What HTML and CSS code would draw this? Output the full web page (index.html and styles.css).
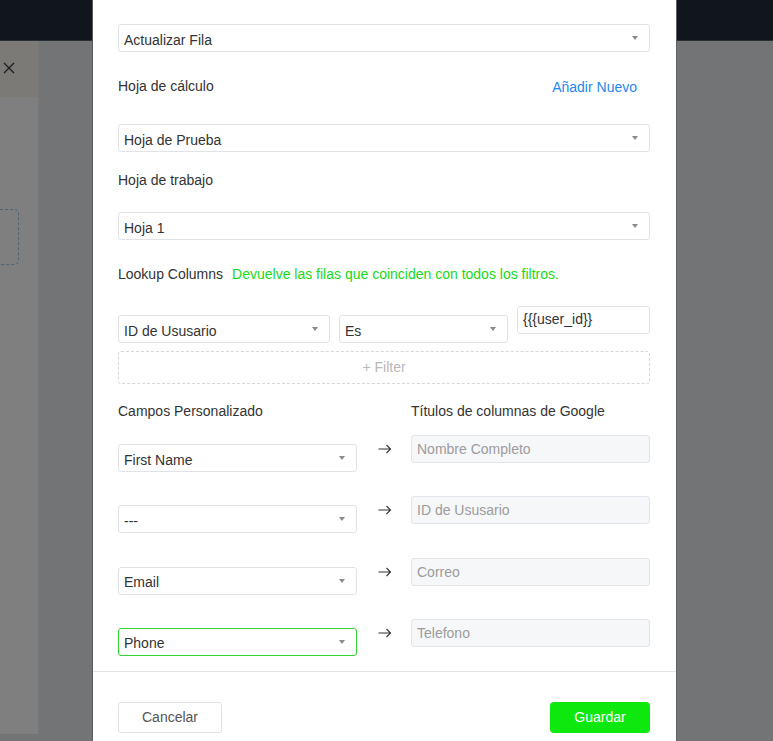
FILE: index.html
```html
<!DOCTYPE html>
<html lang="es">
<head>
<meta charset="utf-8">
<title>Actualizar Fila</title>
<link rel="stylesheet" href="styles.css">
</head>
<body>
<div class="page">
  <div class="topbar"></div>
  <div class="main">
    <div class="sidepanel">
      <div class="side-head">
        <svg class="close" width="12" height="12" viewBox="0 0 12 12"><path d="M1 1 L11 11 M11 1 L1 11" stroke="#1b1d22" stroke-width="1.3" fill="none"/></svg>
      </div>
      <div class="side-body">
        <div class="dropzone"></div>
      </div>
    </div>
    <div class="gutter"></div>
  </div>
</div>

<div class="modal">
  <div class="modal-body">
    <div class="select"><span>Actualizar Fila</span><i class="caret"></i></div>

    <div class="label-row gap-a">
      <span class="label">Hoja de cálculo</span>
      <a class="link">Añadir Nuevo</a>
    </div>
    <div class="select gap-b"><span>Hoja de Prueba</span><i class="caret"></i></div>

    <div class="label-row gap-c"><span class="label">Hoja de trabajo</span></div>
    <div class="select gap-d"><span>Hoja 1</span><i class="caret"></i></div>

    <div class="label-row gap-a">
      <span class="label">Lookup Columns</span>
      <span class="hint">Devuelve las filas que coinciden con todos los filtros.</span>
    </div>

    <div class="filter-row">
      <div class="select sel-a"><span>ID de Ususario</span><i class="caret"></i></div>
      <div class="select sel-b"><span>Es</span><i class="caret"></i></div>
      <div class="input val">{{{user_id}}</div>
    </div>
    <div class="add-filter">+ Filter</div>

    <div class="map-grid">
      <div class="label map-head">Campos Personalizado</div>
      <div></div>
      <div class="label map-head">Títulos de columnas de Google</div>

      <div class="map-row">
        <div class="select low"><span>First Name</span><i class="caret"></i></div>
        <div class="arrow"><svg width="14" height="10" viewBox="0 0 14 10"><path d="M0.5 5 H12.5 M8.5 1 L12.5 5 L8.5 9" stroke="#333" stroke-width="1.1" fill="none"/></svg></div>
        <div class="input ro">Nombre Completo</div>
      </div>
      <div class="map-row">
        <div class="select low"><span>---</span><i class="caret"></i></div>
        <div class="arrow"><svg width="14" height="10" viewBox="0 0 14 10"><path d="M0.5 5 H12.5 M8.5 1 L12.5 5 L8.5 9" stroke="#333" stroke-width="1.1" fill="none"/></svg></div>
        <div class="input ro">ID de Ususario</div>
      </div>
      <div class="map-row">
        <div class="select low"><span>Email</span><i class="caret"></i></div>
        <div class="arrow"><svg width="14" height="10" viewBox="0 0 14 10"><path d="M0.5 5 H12.5 M8.5 1 L12.5 5 L8.5 9" stroke="#333" stroke-width="1.1" fill="none"/></svg></div>
        <div class="input ro">Correo</div>
      </div>
      <div class="map-row">
        <div class="select low focus"><span>Phone</span><i class="caret"></i></div>
        <div class="arrow"><svg width="14" height="10" viewBox="0 0 14 10"><path d="M0.5 5 H12.5 M8.5 1 L12.5 5 L8.5 9" stroke="#333" stroke-width="1.1" fill="none"/></svg></div>
        <div class="input ro">Telefono</div>
      </div>
    </div>
  </div>
  <div class="modal-footer">
    <button class="btn btn-default">Cancelar</button>
    <button class="btn btn-primary">Guardar</button>
  </div>
</div>
</body>
</html>
```

FILE: styles.css
```css
html, body {
  margin: 0;
  padding: 0;
}
body {
  width: 773px;
  height: 741px;
  overflow: hidden;
  position: relative;
  font-family: "Liberation Sans", Arial, sans-serif;
  font-size: 14px;
  color: #333;
  background: #737475;
}
.page {
  display: flex;
  flex-direction: column;
  height: 741px;
}
.topbar {
  height: 40px;
  background: #11151c;
  border-bottom: 1px solid #2a2e35;
}
.main {
  flex: 1;
  display: flex;
}
.sidepanel {
  width: 38px;
  display: flex;
  flex-direction: column;
  margin-bottom: 7px;
  border-right: 1px solid #787878;
}
.side-head {
  height: 56px;
  background: #7b7a77;
  display: flex;
  align-items: center;
  padding-left: 3px;
}
.close { margin-top: -2px; }
.side-body {
  flex: 1;
  background: #7f7f7f;
  padding-top: 112px;
}
.dropzone {
  width: 18px;
  height: 54px;
  border: 1px dashed #4d6273;
  border-left: none;
  border-radius: 0 5px 5px 0;
}
.gutter {
  flex: 1;
  background: #737475;
}

.modal {
  position: absolute;
  left: 93px;
  top: 0;
  width: 583px;
  height: 741px;
  background: #fff;
  box-shadow: -1px 0 0 #5a5a5a, 1px 0 0 #626262;
}
.modal-body {
  padding: 24px 26px 15px 25px;
  border-bottom: 1px solid #e3e5e8;
}
.select {
  height: 28px;
  box-sizing: border-box;
  border: 1px solid #dfe2e7;
  border-radius: 3px;
  display: flex;
  align-items: center;
  justify-content: space-between;
  padding: 0 11px 0 5px;
  color: #333;
  background: #fff;
}
.select span { padding-top: 3px; }
.select.focus { border-color: #31d431; }
.caret {
  width: 0;
  height: 0;
  border-left: 3.5px solid transparent;
  border-right: 3.5px solid transparent;
  border-top: 4px solid #8a8a8a;
}
.label-row {
  height: 28px;
  display: flex;
  align-items: center;
  justify-content: space-between;
}
.label { color: #333; }
.link {
  color: #1e87f0;
  font-size: 14px;
  margin-right: 13px;
  padding-top: 2px;
}
.hint {
  color: #17d917;
  margin-left: 9px;
  margin-right: auto;
}
.gap-a { margin-top: 20px; }
.gap-b { margin-top: 24px; }
.gap-c { margin-top: 14px; }
.gap-d { margin-top: 18px; }

.filter-row {
  margin-top: 18px;
  display: flex;
  align-items: flex-start;
  gap: 9px;
}
.sel-a { width: 212px; margin-top: 9px; }
.sel-b { width: 169px; margin-top: 9px; }
.input {
  height: 28px;
  box-sizing: border-box;
  border: 1px solid #dfe2e7;
  border-radius: 3px;
  display: flex;
  align-items: center;
  padding: 0 5px;
}
.val { flex: 1; color: #333; padding-bottom: 2px; }
.add-filter {
  margin-top: 8px;
  height: 33px;
  box-sizing: border-box;
  border: 1px dashed #d6d8db;
  border-radius: 3px;
  display: flex;
  align-items: center;
  justify-content: center;
  color: #b8b8b8;
  padding-bottom: 1px;
}
.map-grid {
  margin-top: 13px;
  display: grid;
  grid-template-columns: 239px 54px 1fr;
}
.map-head {
  height: 28px;
  display: flex;
  align-items: center;
  margin-bottom: 10px;
}
.map-row {
  grid-column: 1 / 4;
  display: grid;
  grid-template-columns: 239px 54px 1fr;
  height: 37px;
  margin-bottom: 24.33px;
}
.map-row:last-child { margin-bottom: 0; }
.low { margin-top: 9px; }
.arrow {
  height: 28px;
  display: flex;
  align-items: center;
  padding-left: 21px;
}
.ro {
  background: #f6f7f8;
  color: #9c9c9c;
  border-color: #e1e4e8;
}
.modal-footer {
  display: flex;
  justify-content: space-between;
  padding: 30px 26px 0 25px;
}
.btn {
  height: 31px;
  box-sizing: border-box;
  border-radius: 3px;
  font-family: "Liberation Sans", Arial, sans-serif;
  font-size: 14px;
  padding: 0 0 1px 0;
}
.btn-default {
  width: 104px;
  background: #fff;
  border: 1px solid #dfe2e7;
  color: #555;
}
.btn-primary {
  width: 100px;
  background: #0ee80e;
  border: none;
  color: #fff;
  border-radius: 4px;
}
```
